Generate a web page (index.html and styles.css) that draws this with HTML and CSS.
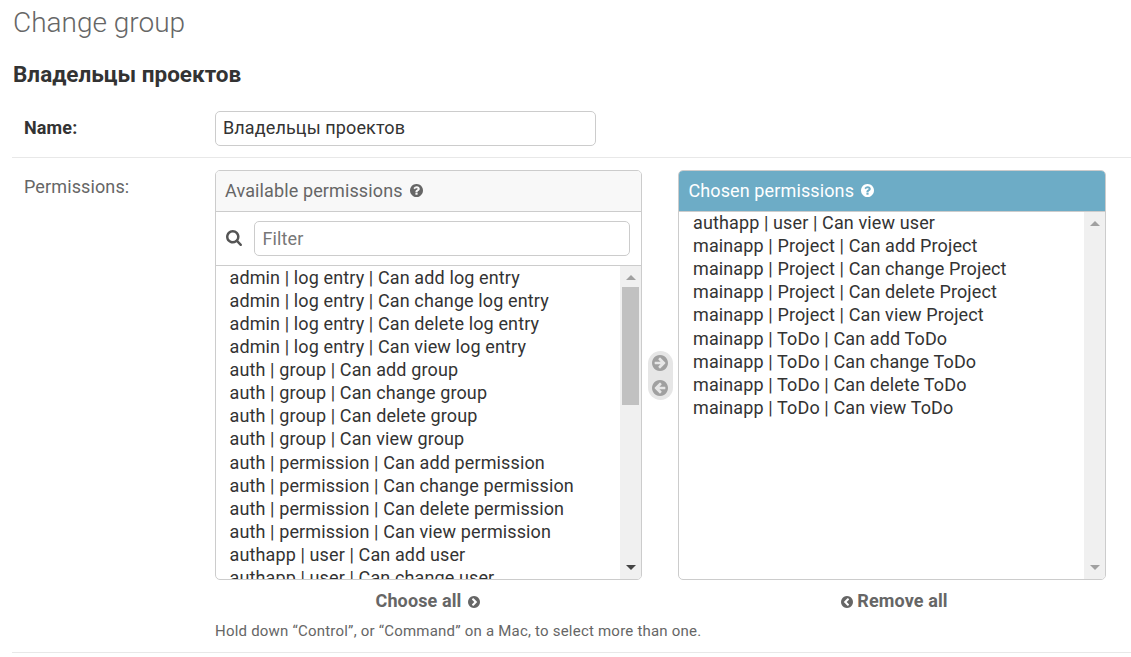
FILE: index.html
```html
<!DOCTYPE html>
<html lang="en">
<head>
<meta charset="utf-8">
<title>Change group</title>
<link rel="stylesheet" href="styles.css">
</head>
<body>
<svg class="defs" width="0" height="0">
  <symbol id="help" viewBox="0 0 1536 1536"><path d="M896 1248v-192q0-14-9-23t-23-9H672q-14 0-23 9t-9 23v192q0 14 9 23t23 9h192q14 0 23-9t9-23zm256-672q0-88-55.500-163t-138.500-116-170-41q-243 0-371 213-15 24 8 42l132 100q7 6 19 6 16 0 25-12 53-68 86-92 34-24 86-24 48 0 85.500 26t37.500 59q0 38-20 61t-68 45q-63 28-115.500 86.500T640 892v36q0 14 9 23t23 9h192q14 0 23-9t9-23q0-19 21.500-49.500T972 829q32-18 49-28.500t46-35 44.500-48 28-60.500 12.500-81zm384 192q0 209-103 385.500T1153.500 1433 768 1536t-385.500-103T103 1153.500 0 768t103-385.500T382.500 103 768 0t385.500 103T1433 382.500 1536 768z"/></symbol>
  <symbol id="search" viewBox="0 0 1664 1664"><path d="M1152 704q0-185-131.500-316.500T704 256 387.500 387.500 256 704t131.500 316.500T704 1152t316.500-131.500T1152 704zm512 832q0 52-38 90t-90 38q-54 0-90-38l-343-342q-179 124-399 124-143 0-273.500-55.500t-225-150-150-225T0 704t55.500-273.500 150-225 225-150T704 0t273.500 55.500 225 150 150 225T1408 704q0 220-124 399l343 343q37 37 37 90z"/></symbol>
  <symbol id="arrow" viewBox="0 0 1536 1536"><path d="M1285 768q0-27-18-45L904 360l-91-91q-18-18-45-18t-45 18l-91 91q-18 18-18 45t18 45l189 190H320q-26 0-45 19t-19 45v128q0 26 19 45t45 19h502l-189 189q-19 19-19 45t19 45l91 91q18 18 45 18t45-18l362-362 91-91q18-18 18-45zm251 0q0 209-103 385.500T1153.500 1433 768 1536t-385.500-103T103 1153.500 0 768t103-385.500T382.500 103 768 0t385.500 103T1433 382.500 1536 768z"/></symbol>
  <symbol id="chevron" viewBox="0 0 1536 1536"><path d="M717 1243l430-430q19-19 19-45t-19-45L717 293q-19-19-45-19t-45 19l-102 102q-19 19-19 45t19 45l283 283-283 283q-19 19-19 45t19 45l102 102q19 19 45 19t45-19zm819-475q0 209-103 385.500T1153.500 1433 768 1536t-385.500-103T103 1153.500 0 768t103-385.500T382.500 103 768 0t385.500 103T1433 382.500 1536 768z"/></symbol>
</svg>
<main class="content">
  <h1>Change group</h1>
  <h2>Владельцы проектов</h2>
  <div class="row name-row">
    <label class="label required">Name:</label>
    <input class="text-input" type="text" value="Владельцы проектов">
  </div>
  <div class="row permissions-row">
    <label class="label">Permissions:</label>
    <div class="field">
      <div class="selector">
        <div class="column">
          <section class="box">
            <h3 class="box-title"><span>Available permissions</span><svg class="help"><use href="#help"/></svg></h3>
            <div class="filter"><svg class="search"><use href="#search"/></svg><input class="filter-input" type="text" placeholder="Filter"></div>
            <div class="list-wrap">
              <ul class="options">
                <li>admin | log entry | Can add log entry</li>
                <li>admin | log entry | Can change log entry</li>
                <li>admin | log entry | Can delete log entry</li>
                <li>admin | log entry | Can view log entry</li>
                <li>auth | group | Can add group</li>
                <li>auth | group | Can change group</li>
                <li>auth | group | Can delete group</li>
                <li>auth | group | Can view group</li>
                <li>auth | permission | Can add permission</li>
                <li>auth | permission | Can change permission</li>
                <li>auth | permission | Can delete permission</li>
                <li>auth | permission | Can view permission</li>
                <li>authapp | user | Can add user</li>
                <li>authapp | user | Can change user</li>
              </ul>
              <div class="scrollbar"><i class="up"></i><i class="thumb"></i><i class="down active"></i></div>
            </div>
          </section>
          <a class="all"><span>Choose all</span><svg class="chev"><use href="#chevron"/></svg></a>
        </div>
        <div class="chooser"><svg><use href="#arrow"/></svg><svg class="flip"><use href="#arrow"/></svg></div>
        <div class="column">
          <section class="box">
            <h3 class="box-title chosen"><span>Chosen permissions</span><svg class="help"><use href="#help"/></svg></h3>
            <div class="list-wrap">
              <ul class="options chosen-options">
                <li>authapp | user | Can view user</li>
                <li>mainapp | Project | Can add Project</li>
                <li>mainapp | Project | Can change Project</li>
                <li>mainapp | Project | Can delete Project</li>
                <li>mainapp | Project | Can view Project</li>
                <li>mainapp | ToDo | Can add ToDo</li>
                <li>mainapp | ToDo | Can change ToDo</li>
                <li>mainapp | ToDo | Can delete ToDo</li>
                <li>mainapp | ToDo | Can view ToDo</li>
              </ul>
              <div class="scrollbar"><i class="up"></i><i class="down"></i></div>
            </div>
          </section>
          <a class="all remove"><svg class="chev flip"><use href="#chevron"/></svg><span>Remove all</span></a>
        </div>
      </div>
      <p class="hint">Hold down “Control”, or “Command” on a Mac, to select more than one.</p>
    </div>
  </div>
</main>
</body>
</html>
```
FILE: styles.css
```css
* { box-sizing: border-box; }
body { margin: 0; background: #fff; color: #333; font-family: Roboto, sans-serif; font-size: 18px; letter-spacing: .12px; overflow: hidden; }
.defs { display: block; }
svg { fill: currentColor; flex: none; }
.content { padding-left: 12px; }
h1 { margin: 0; padding: 5px 0 0 1px; font-size: 28px; line-height: 36px; font-weight: 300; color: #666; letter-spacing: 0; }
h2 { margin: 19px 0 0; padding-left: 1px; font-size: 22.5px; line-height: 28px; font-weight: 700; letter-spacing: 0; }
.row { display: flex; padding-left: 12px; border-bottom: 1px solid #e8e8e8; }
.name-row { height: 70px; padding-top: 23px; }
.permissions-row { height: 495px; padding-top: 12px; }
.label { width: 191px; flex: none; line-height: 34px; color: #666; }
.required { font-weight: 700; color: #333; }
.text-input, .filter-input { height: 35px; border: 1px solid #ccc; border-radius: 5px; padding: 0 7px; font: 18px Roboto, sans-serif; letter-spacing: .12px; color: #333; background: #fff; outline: 0; }
.text-input { width: 381px; padding-bottom: 2px; }
.selector { display: flex; }
.column { width: 427px; }
.column:last-child { width: 428px; }
.box { height: 410px; border: 1px solid #ccc; border-radius: 5px; overflow: hidden; display: flex; flex-direction: column; }
.box-title { margin: 0; height: 41px; flex: none; border-bottom: 1px solid #ccc; background: #f8f8f8; color: #666; font-size: 18px; font-weight: 400; display: flex; align-items: center; padding: 0 0 2px 9px; gap: 7px; }
.chosen { background: #6dacc6; color: #fff; margin: -1px -1px 0; height: 42px; padding: 0 0 1px 10.4px; }
.help { width: 13px; height: 13px; }
.filter { height: 54px; flex: none; border-bottom: 1px solid #ccc; display: flex; align-items: center; padding-left: 9.5px; color: #555; }
.search { width: 16px; height: 16px; margin: -2px 12.5px 0 0; }
.filter-input { width: 376px; padding-left: 7.5px; }
.filter-input::placeholder { color: #777; opacity: 1; }
.list-wrap { flex: 1; min-height: 0; display: flex; }
.options { list-style: none; margin: 0; padding: 0 0 0 13.5px; flex: 1; overflow: hidden; line-height: 23.1px; white-space: nowrap; }
.options li:first-child { margin-top: -.2px; }
.chosen-options { padding-left: 14px; }
.chosen-options li:first-child { margin-top: -.9px; }
.scrollbar { width: 21px; background: #f0f0f0; display: flex; flex-direction: column; align-items: center; padding: 9px 0 9px; }
.up { border: 5px solid transparent; border-top: 0; border-bottom: 5px solid #a0a0a0; }
.down { margin-top: auto; border: 5px solid transparent; border-bottom: 0; border-top: 5px solid #a0a0a0; }
.active { border-top-color: #444; }
.thumb { width: 17px; height: 118px; background: #c1c1c1; margin-top: 7px; }
.chooser { width: 25px; height: 49px; margin: 181px 5px 0 6px; background: #e6e6e6; border-radius: 13px; color: #a0a0a0; display: flex; flex-direction: column; align-items: center; gap: 9px; padding: 4px 1px 0 0; }
.chooser svg { width: 16px; height: 16px; }
.flip { transform: scaleX(-1); }
.all { display: flex; justify-content: center; align-items: center; gap: 7px; height: 42px; padding: 0 1px 1px 0; color: #666; font-weight: 700; }
.chev { width: 12px; height: 12px; margin-top: 3px; }
.remove { gap: 4px; padding-left: 6px; }
.hint { margin: 0; font-size: 15px; line-height: 18px; color: #666; letter-spacing: .21px; }
```
